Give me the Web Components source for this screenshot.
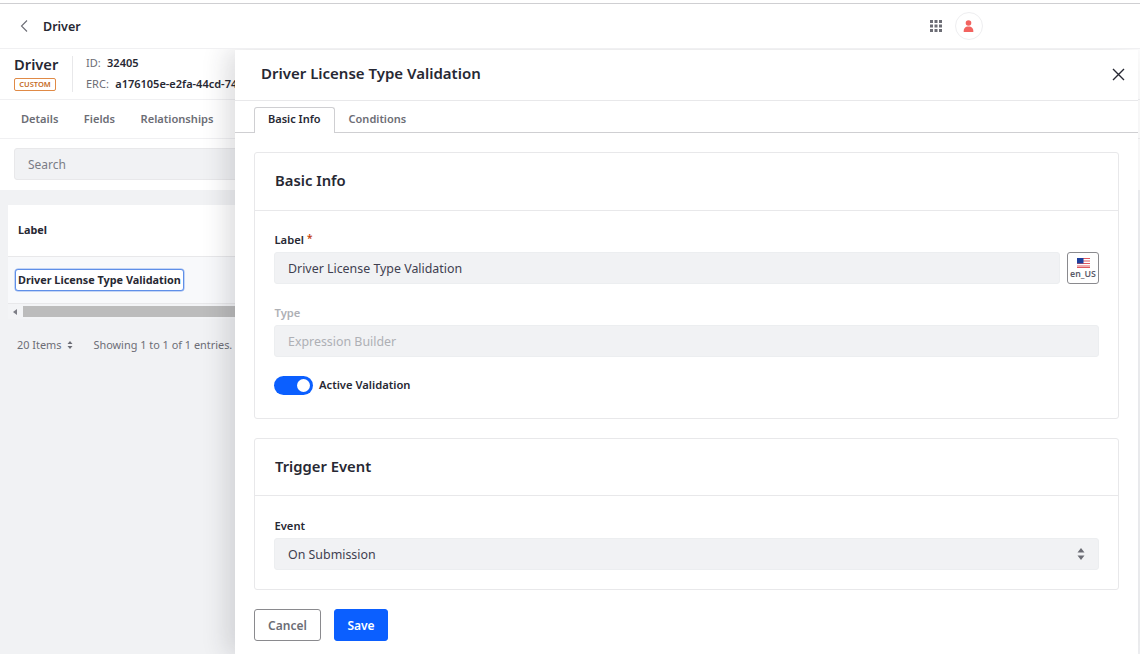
<!DOCTYPE html>
<html lang="en">
<head>
<meta charset="utf-8">
<title>Driver</title>
<style>
    html, body { margin: 0; height: 100%; background: #fff; }
    body { font-family: "Noto Sans", sans-serif; color: #272833; overflow: hidden; }
</style>
</head>
<body>
<object-page>
    <validation-panel slot="panel"></validation-panel>
</object-page>

<script>
// Основа для компонентов: разметка и стили в открытом shadow root
class Base extends HTMLElement {
    constructor() {
        super();
        this.attachShadow({ mode: 'open' });
    }

    connectedCallback() {
        this.shadowRoot.innerHTML = this.template();
    }
}

// Левая часть страницы, лежит под панелью
class ObjectPage extends Base {
    template() {
        return `
            <style>
                :host { display: block; position: relative; width: 1140px; height: 654px; overflow: hidden; background: #f1f2f4; }
                .line { height: 3px; background: #fff; border-bottom: 1px solid #cfcfd2; }
                top-bar { position: relative; z-index: 2; }
            </style>
            <div class="line"></div>
            <top-bar></top-bar>
            <object-header></object-header>
            <object-tabs></object-tabs>
            <search-bar></search-bar>
            <data-table></data-table>
            <table-footer></table-footer>
            <slot name="panel"></slot>
        `;
    }
}

class TopBar extends Base {
    template() {
        return `
            <style>
                :host { display: flex; align-items: center; height: 44px; background: #fff; border-bottom: 1px solid #f0f0f2; padding-left: 20px; }
                b { font-size: 12.500px; font-weight: 600; margin-left: 14px; color: #272833; }
                .apps { margin-left: 849px; width: 12px; height: 12px; display: block; }
                .user { margin-left: 13px; width: 26px; height: 26px; border: 1px solid #eeeef0; border-radius: 50%; display: flex; align-items: center; justify-content: center; }
            </style>
            <svg width="9" height="14" viewBox="0 0 9 14" fill="none" stroke="#6c6d75" stroke-width="1.100"><path d="M7 1.500 1.500 7 7 12.500"/></svg>
            <b>Driver</b>
            <svg class="apps" viewBox="0 0 12 12" fill="#6c6d75">
                <rect width="3" height="3"/><rect x="4.500" width="3" height="3"/><rect x="9" width="3" height="3"/>
                <rect y="4.500" width="3" height="3"/><rect x="4.500" y="4.500" width="3" height="3"/><rect x="9" y="4.500" width="3" height="3"/>
                <rect y="9" width="3" height="3"/><rect x="4.500" y="9" width="3" height="3"/><rect x="9" y="9" width="3" height="3"/>
            </svg>
            <div class="user">
                <svg width="11" height="12" viewBox="0 0 11 12" fill="#f2635f"><circle cx="5.500" cy="3" r="2.800"/><path d="M0.700 12c-.4-3.500 1.600-5.500 4.800-5.500s5.200 2 4.800 5.500z"/></svg>
            </div>
        `;
    }
}

class ObjectHeader extends Base {
    template() {
        return `
            <style>
                :host { display: flex; height: 51px; background: #fff; border-bottom: 1px solid #f0f0f2; padding: 7px 0 0 14px; box-sizing: border-box; }
                .title { width: 58px; }
                .name { font-size: 14.700px; font-weight: 600; line-height: 16px; padding-bottom: 2px; }
                .badge { display: block; width: 42px; box-sizing: border-box; margin-top: 4px; border: 1px solid #e08a46; border-radius: 2px; color: #c56a1e; font-size: 7.500px; font-weight: 600; line-height: 11px; text-align: center; }
                .ids { border-left: 1px solid #e8e8ea; padding-left: 13px; height: 36px; font-size: 11px; color: #6c6d75; white-space: nowrap; }
                .ids div { line-height: 21px; }
                .ids div:first-child { margin-top: -4px; }
                .ids b { color: #272833; font-weight: 600; margin-left: 3.500px; }
            </style>
            <div class="title">
                <div class="name">Driver</div>
                <span class="badge">CUSTOM</span>
            </div>
            <div class="ids">
                <div>ID: <b>32405</b></div>
                <div>ERC: <b>a176105e-e2fa-44cd-74b</b></div>
            </div>
        `;
    }
}

class ObjectTabs extends Base {
    template() {
        return `
            <style>
                :host { display: flex; align-items: center; gap: 25.500px; height: 39px; background: #fff; border-bottom: 1px solid #f0f0f2; padding: 0 0 2px 21px; box-sizing: border-box; font-size: 11.100px; font-weight: 600; color: #6c6d75; }
            </style>
            <span>Details</span><span>Fields</span><span>Relationships</span>
        `;
    }
}

class SearchBar extends Base {
    template() {
        return `
            <style>
                :host { display: block; height: 51px; background: #fff; padding: 9px 0 0 14px; box-sizing: border-box; }
                div { width: 260px; height: 32px; background: #f1f2f4; border: 1px solid #e8e8ea; border-radius: 3px; box-sizing: border-box; padding-left: 13px; font-size: 12px; line-height: 32px; color: #7a7c85; }
            </style>
            <div>Search</div>
        `;
    }
}

class DataTable extends Base {
    template() {
        return `
            <style>
                :host { display: block; margin: 15px 0 0 8px; width: 300px; }
                .head { height: 52px; background: #fff; border-bottom: 1px solid #e8e8ea; box-sizing: border-box; padding: 0 0 2px 10px; display: flex; align-items: center; font-size: 10.800px; font-weight: 700; }
                .row { display: flex; align-items: flex-start; height: 47px; background: #f8f9fb; border-bottom: 1px solid #e8e8ea; box-sizing: border-box; padding: 12px 0 0 7px; }
                .cell { font-size: 10.850px; font-weight: 700; line-height: 20px; padding: 0 2px; background: #fff; border: 1px solid #5f8fe8; border-radius: 3px; box-shadow: 0 0 0 .5px #8fb2f0; white-space: nowrap; }
                .scroll { display: flex; align-items: center; height: 15px; background: #f3f4f6; padding-left: 5px; }
                .arrow { width: 0; height: 0; border: 3.500px solid transparent; border-right: 4px solid #7d7e86; border-left: 0; }
                .thumb { flex: 1; height: 11px; margin-left: 6px; background: #bcbcbc; }
            </style>
            <div class="head">Label</div>
            <div class="row"><span class="cell">Driver License Type Validation</span></div>
            <div class="scroll"><span class="arrow"></span><span class="thumb"></span></div>
        `;
    }
}

class TableFooter extends Base {
    template() {
        return `
            <style>
                :host { display: flex; align-items: center; margin: 16px 0 0 17px; height: 18px; font-size: 10.900px; color: #6c6d75; white-space: nowrap; }
                svg { margin: 1px 20px 0 6px; }
            </style>
            <span>20 Items</span>
            <svg width="6" height="8" viewBox="0 0 6 8" fill="#6c6d75"><path d="M3 0l2.500 3h-5zM3 8L.5 5h5z"/></svg>
            <span>Showing 1 to 1 of 1 entries.</span>
        `;
    }
}

// Боковая панель поверх страницы
class ValidationPanel extends Base {
    template() {
        return `
            <style>
                :host { position: absolute; left: 235px; top: 50px; width: 903px; height: 604px; background: #fff; box-shadow: -8px 0 24px rgba(39, 40, 51, .16); display: block; box-sizing: border-box; }
                .head { display: flex; align-items: center; justify-content: space-between; height: 51px; padding: 0 13px 4px 26px; border-bottom: 1px solid #e8e8ea; box-sizing: border-box; }
                h2 { margin: 0; font-size: 15px; font-weight: 600; color: #272833; }
                .close { display: block; margin-top: 3px; }
                .tabs { display: flex; align-items: flex-end; height: 31px; padding-left: 19px; border-bottom: 1px solid #cfcfd2; font-size: 11px; font-weight: 600; }
                .tab { display: flex; align-items: center; padding: 0 13px 4px; height: 26px; margin-bottom: -1px; box-sizing: border-box; color: #6c6d75; border: 1px solid transparent; }
                .tab.on { color: #272833; background: #fff; border-color: #cfcfd2; border-bottom: 0; border-radius: 3px 3px 0 0; }
                .body { padding: 19px 19px 0; display: flex; flex-direction: column; gap: 19px; }
                .row { display: flex; gap: 7px; }
                .row text-field { flex: 1; }
                .lang { width: 32px; height: 32px; margin-top: 20px; border: 1px solid #8a8a8e; border-radius: 3px; box-sizing: border-box; display: flex; flex-direction: column; align-items: center; padding-top: 5px; font-size: 8.800px; font-weight: 600; line-height: 12px; color: #5a5b69; }
                .lang svg { display: block; }
                .actions { display: flex; gap: 13px; margin-top: 19px; padding-left: 19px; }
                button { font: 600 12px "Noto Sans", sans-serif; height: 32px; border-radius: 3px; padding: 0; box-sizing: border-box; }
                .cancel { width: 67px; background: #fff; border: 1px solid #8a8a8e; color: #6c6d75; }
                .save { width: 54px; background: #0b5fff; border: 1px solid #0b5fff; color: #fff; }
            </style>
            <div class="head">
                <h2>Driver License Type Validation</h2>
                <svg class="close" width="13" height="13" viewBox="0 0 13 13" stroke="#272833" stroke-width="1.400" fill="none"><path d="M1 1l11 11M12 1 1 12"/></svg>
            </div>
            <div class="tabs">
                <div class="tab on">Basic Info</div>
                <div class="tab">Conditions</div>
            </div>
            <div class="body">
                <form-card heading="Basic Info" style="height:267px">
                    <div class="row">
                        <text-field label="Label" required value="Driver License Type Validation"></text-field>
                        <div class="lang">
                            <svg width="13" height="10" viewBox="0 0 13 10">
                                <rect width="13" height="10" fill="#fff"/>
                                <path d="M0 .5h13M0 3h13M0 5.500h13M0 8h13" stroke="#e0585f" stroke-width="1.100"/>
                                <path d="M0 9.500h13" stroke="#e0585f" stroke-width="1"/>
                                <rect width="6.500" height="5.500" fill="#1d3f9e"/>
                            </svg>
                            en_US
                        </div>
                    </div>
                    <text-field label="Type" disabled value="Expression Builder" style="margin-top:21px"></text-field>
                    <toggle-row label="Active Validation"></toggle-row>
                </form-card>
                <form-card heading="Trigger Event" style="height:152px; --head: 57px; --head-pad: 2px; --pad: 22px">
                    <text-field label="Event" value="On Submission" select></text-field>
                </form-card>
            </div>
            <div class="actions">
                <button class="cancel">Cancel</button>
                <button class="save">Save</button>
            </div>
        `;
    }
}

class FormCard extends Base {
    template() {
        return `
            <style>
                :host { display: block; border: 1px solid #e8e8ea; border-radius: 3px; box-sizing: border-box; }
                h3 { margin: 0; height: var(--head, 58px); padding: 0 0 var(--head-pad, 4px) 20px; display: flex; align-items: center; font-size: 14.800px; font-weight: 600; color: #272833; border-bottom: 1px solid #e8e8ea; box-sizing: border-box; }
                .content { padding: var(--pad, 21px) 19px 0 19px; }
            </style>
            <h3>${this.getAttribute('heading')}</h3>
            <div class="content"><slot></slot></div>
        `;
    }
}

class TextField extends Base {
    template() {
        const off = this.hasAttribute('disabled');
        const star = this.hasAttribute('required') ? '<i>*</i>' : '';
        const arrows = this.hasAttribute('select')
            ? '<svg width="8" height="12" viewBox="0 0 8 12" fill="#6c6d75"><path d="M4 0l3.500 4.500h-7zM4 12 .5 7.500h7z"/></svg>'
            : '';
        return `
            <style>
                :host { display: block; }
                label { display: block; height: 20px; padding-left: .5px; font-size: 11.200px; font-weight: 600; line-height: 16px; color: ${off ? '#aeb0b5' : '#272833'}; }
                i { color: #c2410c; font-style: normal; font-size: 10px; line-height: 0; margin-left: 3px; vertical-align: 2px; }
                .box { display: flex; align-items: center; justify-content: space-between; height: 32px; padding: 0 13px; box-sizing: border-box; background: #f1f2f4; border: 1px solid #eceef0; border-radius: 3px; font-size: 12.400px; color: ${off ? '#aeb0b5' : '#3f4050'}; }
            </style>
            <label>${this.getAttribute('label')}${star}</label>
            <div class="box"><span>${this.getAttribute('value')}</span>${arrows}</div>
        `;
    }
}

class ToggleRow extends Base {
    template() {
        return `
            <style>
                :host { display: flex; align-items: center; gap: 6px; margin-top: 18px; height: 20px; font-size: 11.200px; font-weight: 600; color: #272833; }
                .track { position: relative; width: 39px; height: 19px; border-radius: 10px; background: #0b5fff; }
                .track::after { content: ""; position: absolute; right: 3px; top: 3px; width: 13px; height: 13px; border-radius: 50%; background: #fff; }
                .text { padding-bottom: 2px; }
            </style>
            <span class="track"></span>
            <span class="text">${this.getAttribute('label')}</span>
        `;
    }
}

// Регистрация компонентов
customElements.define('object-page', ObjectPage);
customElements.define('top-bar', TopBar);
customElements.define('object-header', ObjectHeader);
customElements.define('object-tabs', ObjectTabs);
customElements.define('search-bar', SearchBar);
customElements.define('data-table', DataTable);
customElements.define('table-footer', TableFooter);
customElements.define('validation-panel', ValidationPanel);
customElements.define('form-card', FormCard);
customElements.define('text-field', TextField);
customElements.define('toggle-row', ToggleRow);
</script>
</body>
</html>
